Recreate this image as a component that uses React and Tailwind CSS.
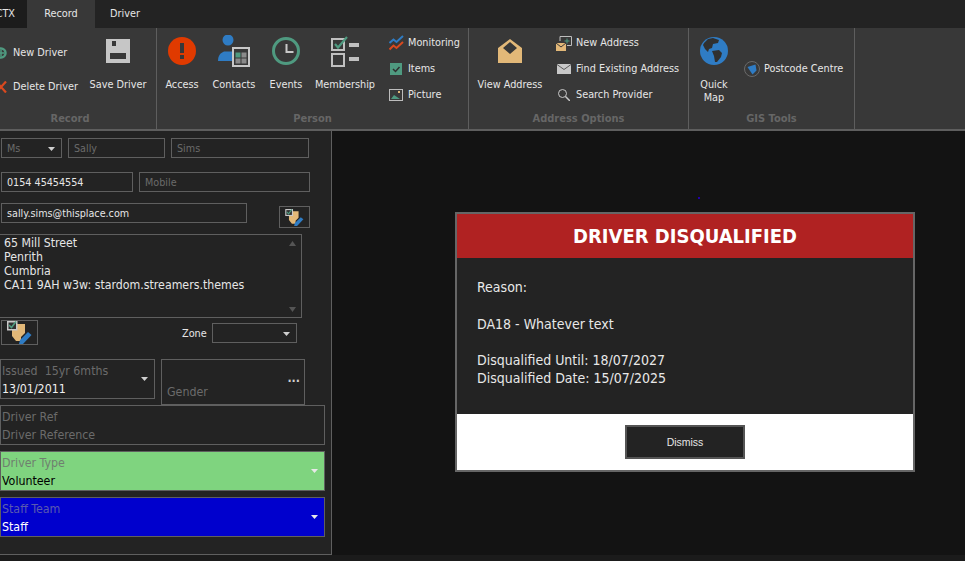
import React from "react";

const Big = ({ icon, label, w }) => (
  <div className={`flex flex-col items-center shrink-0 ${w}`}>
    <div className="h-[28px] w-[28px] mt-[9px] flex items-center justify-center">{icon}</div>
    <div className="mt-[13px] text-center leading-[13px] text-[#e6e6e6] whitespace-nowrap">{label}</div>
  </div>
);

const Small = ({ icon, label }) => (
  <div className="h-[26px] flex items-center whitespace-nowrap text-[#e6e6e6]">
    <div className="w-[16px] h-[16px] shrink-0 flex items-center justify-center">{icon}</div>
    <span className="ml-[4px] pt-px">{label}</span>
  </div>
);

const Group = ({ w, label, children, labelClass = "" }) => (
  <div className={`relative shrink-0 h-full border-r border-[#5e5e5e] flex ${w}`}>
    <div className="flex h-[80px] w-full">{children}</div>
    <div className={`absolute bottom-[3px] left-0 right-0 text-center font-bold text-[11px] text-[#666] leading-[14px] ${labelClass}`}>{label}</div>
  </div>
);

const Field = ({ children, className = "" }) => (
  <div className={`border border-[#5f5f5f] h-[20px] flex items-center px-[5px] pt-[2px] leading-none text-[10.7px] ${className}`}>{children}</div>
);

const Caret = ({ color = "#cfcfcf" }) => (
  <svg width="7" height="4" viewBox="0 0 7 4" className="shrink-0"><path d="M0 0h7L3.5 4z" fill={color} /></svg>
);

const EditIcon = ({ w, h }) => (
  <svg width={w} height={h} viewBox="0 0 25 23">
    <path d="M5 3h13v9l-4 4v4H9l-4-5z" fill="#e2b878" />
    <rect x="0.75" y="0.75" width="9" height="8" fill="#303030" stroke="#c8c8c8" strokeWidth="1.5" />
    <path d="M2 4l2.500 2.500L9 0.500" fill="none" stroke="#4f9a80" strokeWidth="1.6" />
    <path d="M12 23l1-4 8-8 3.500 3L16 23z" fill="#2f7cc4" />
  </svg>
);

const Stacked = ({ label, value, labelColor = "text-[#6b6b6b]", valueColor = "text-[#f0f0f0]", caret, className = "" }) => (
  <div className={`border border-[#5f5f5f] h-[40px] relative pl-[1px] ml-[-1px] text-[12.3px] whitespace-pre ${className}`}>
    <div className={`leading-[18px] mt-[2px] ${labelColor}`}>{label}</div>
    <div className={`leading-[18px] ${valueColor}`}>{value}</div>
    {caret && <div className="absolute right-[6px] top-[17px] flex"><Caret color={caret} /></div>}
  </div>
);

export default function App() {
  return (
    <div className="w-[965px] h-[561px] overflow-hidden bg-[#131313] text-[10.8px] text-[#e6e6e6] font-['DejaVu_Sans_Condensed','Noto_Sans',sans-serif] flex flex-col">
      {/* tabs */}
      <div className="h-[28px] bg-[#232323] flex shrink-0">
        <div className="w-[27px] bg-[#1c1c1c] flex items-center justify-end pr-[12px] whitespace-nowrap">CTX</div>
        <div className="w-[68px] bg-[#383838] flex items-center justify-center">Record</div>
        <div className="w-[60px] flex items-center justify-center">Driver</div>
      </div>
      {/* ribbon */}
      <div className="h-[103px] shrink-0 bg-[#383838] border-b-2 border-[#5e5e5e] flex">
        <Group w="w-[157px]" label="Record" labelClass="pr-[16px]">
          <div className="flex flex-col w-[87px] shrink-0 ml-[-5px] pt-[8px]">
            <div className="h-[34px] flex items-center whitespace-nowrap">
              <svg width="12" height="12" viewBox="0 0 12 12" className="shrink-0"><circle cx="6" cy="6" r="4.500" fill="none" stroke="#4f9a80" strokeWidth="2.500" /><path d="M6 3v6M3 6h6" stroke="#4f9a80" strokeWidth="1.500" /></svg>
              <span className="ml-[6px]">New Driver</span>
            </div>
            <div className="h-[34px] flex items-center whitespace-nowrap">
              <svg width="12" height="12" viewBox="0 0 12 12" className="shrink-0"><path d="M1 0.500l10 11M11 0.500l-10 11" stroke="#d9491f" strokeWidth="2.200" /></svg>
              <span className="ml-[6px]">Delete Driver</span>
            </div>
          </div>
          <Big w="w-[72px]" label="Save Driver" icon={
            <svg width="24" height="24" viewBox="0 0 24 24"><path fillRule="evenodd" d="M0 0h24v24H0zM6 2v5h4V2zM4 14v6h16v-6z" fill="#c6c6c6" /></svg>
          } />
        </Group>
        <Group w="w-[312px]" label="Person">
          <div className="w-0 ml-[-1px]" />
          <Big w="w-[52px]" label="Access" icon={
            <svg width="28" height="28" viewBox="0 0 28 28"><circle cx="14" cy="14" r="14" fill="#e03a00" /><rect x="12" y="6" width="4" height="10" fill="#383838" /><rect x="12" y="18" width="4" height="4" fill="#383838" /></svg>
          } />
          <Big w="w-[52px]" label="Contacts" icon={
            <svg width="32" height="32" viewBox="0 0 32 32" className="shrink-0"><circle cx="10" cy="5" r="5.500" fill="#2f7cc4" /><path d="M0 26c0-5 2-8 6-9.500h8V26z" fill="#2f7cc4" /><rect x="14" y="12" width="18" height="20" fill="#c8c8c8" /><rect x="16" y="14" width="14" height="16" fill="#383838" /><rect x="17.500" y="17.500" width="5" height="5" fill="#4f9a80" /><rect x="23.500" y="17.500" width="5" height="5" fill="#8a8a8a" /><rect x="17.500" y="23.500" width="5" height="5" fill="#8a8a8a" /><rect x="23.500" y="23.500" width="5" height="5" fill="#8a8a8a" /></svg>
          } />
          <Big w="w-[52px]" label="Events" icon={
            <svg width="28" height="28" viewBox="0 0 28 28"><circle cx="14" cy="14" r="12.500" fill="none" stroke="#4f9a80" strokeWidth="3" /><path d="M14.500 7v8h7" fill="none" stroke="#c8c8c8" strokeWidth="2" /></svg>
          } />
          <Big w="w-[66px]" label="Membership" icon={
            <svg width="28" height="28" viewBox="0 0 28 28" className="overflow-visible"><rect x="1" y="2" width="12" height="11" fill="none" stroke="#c0c0c0" strokeWidth="2" /><path d="M4 7l3 3.500L16 0" fill="none" stroke="#4f9a80" strokeWidth="2.200" /><rect x="1" y="17" width="12" height="12" fill="none" stroke="#c0c0c0" strokeWidth="2" /><rect x="18" y="6" width="10" height="4" fill="#c0c0c0" /><rect x="18" y="20" width="10" height="4" fill="#c0c0c0" /></svg>
          } />
          <div className="flex flex-col ml-[10px] pt-[2px]">
            <Small label="Monitoring" icon={<svg width="15" height="16" viewBox="0 0 15 16"><path d="M0.500 8l4-3.500 3 2.500 6.500-6" fill="none" stroke="#2f7cc4" strokeWidth="2" /><path d="M0.500 14.500l4-4 3 2.500 6.500-6" fill="none" stroke="#d9491f" strokeWidth="2" /></svg>} />
            <Small label="Items" icon={<svg width="12" height="12" viewBox="0 0 12 12"><rect width="12" height="12" fill="#4f9a80" /><path d="M3 6l2.500 2.500L9.500 4" fill="none" stroke="#303030" strokeWidth="1.500" /></svg>} />
            <Small label="Picture" icon={<svg width="14" height="12" viewBox="0 0 14 12"><rect x="0.500" y="0.500" width="13" height="11" fill="none" stroke="#bdbdbd" /><path d="M2 10l3-4 3 2 3 2z" fill="#4f9a80" /><rect x="9" y="2" width="2" height="2" fill="#e2b878" /></svg>} />
          </div>
        </Group>
        <Group w="w-[220px]" label="Address Options">
          <Big w="w-[82px]" label="View Address" icon={
            <svg width="24" height="24" viewBox="0 0 24 24"><path fillRule="evenodd" d="M0 9L12 0l12 9v15H0zM12 3L5 9l7 6 7-6z" fill="#e2b878" /></svg>
          } />
          <div className="flex flex-col ml-[5px] pt-[2px]">
            <Small label="New Address" icon={<svg width="16" height="15" viewBox="0 0 16 15"><path d="M4 5V0.500h11.500v9H11" fill="none" stroke="#bdbdbd" /><path d="M11 2.500v5M8.500 5h5" stroke="#4f9a80" /><rect y="7" width="10" height="8" fill="#e2b878" /><path d="M0 7l5 4 5-4" fill="none" stroke="#383838" /></svg>} />
            <Small label="Find Existing Address" icon={<svg width="14" height="10" viewBox="0 0 14 10"><rect width="14" height="10" fill="#c8c8c8" /><path d="M0 0.500l7 5 7-5" fill="none" stroke="#5a5a5a" /></svg>} />
            <Small label="Search Provider" icon={<svg width="12" height="12" viewBox="0 0 12 12"><circle cx="4.500" cy="4.500" r="4" fill="none" stroke="#c8c8c8" /><path d="M7.500 7.500l4.500 4.500" stroke="#c8c8c8" strokeWidth="1.500" /></svg>} />
          </div>
        </Group>
        <Group w="w-[166px]" label="GIS Tools">
          <Big w="w-[50px]" label={<>Quick<br />Map</>} icon={
            <svg width="28" height="28" viewBox="0 0 28 28"><circle cx="14" cy="14" r="14" fill="#2f7cc4" /><path d="M4 6l4-4 5-1 6 2-1 3-5 1-1 4-3 1-1 3-3-3-2-4zM12 14l7-1 3 3-1 4-4 5-2 0-1-6z" fill="#303030" /></svg>
          } />
          <div className="flex flex-col justify-center ml-[5px] pt-[2px]">
            <Small label="Postcode Centre" icon={<svg width="16" height="16" viewBox="0 0 16 16"><circle cx="8" cy="8" r="7.500" fill="none" stroke="#6a6a6a" /><path d="M3.500 6l8-2.500 1 6-4 4z" fill="#2f7cc4" /></svg>} />
          </div>
        </Group>
      </div>
      {/* main */}
      <div className="flex-1 flex items-start relative">
        <div className="w-[332px] h-[424px] shrink-0 bg-[#232323] border-r border-b border-[#5f5f5f] pl-[1px] pt-[7px]">
          <div className="flex gap-[6px] text-[#6b6b6b]">
            <Field className="w-[61px] justify-between pr-[6px]">Ms<Caret /></Field>
            <Field className="w-[97px]">Sally</Field>
            <Field className="w-[138px]">Sims</Field>
          </div>
          <div className="flex gap-[6px] mt-[14px]">
            <Field className="w-[132px]">0154 45454554</Field>
            <Field className="w-[171px] text-[#6b6b6b]">Mobile</Field>
          </div>
          <div className="flex mt-[11px] h-[25px] items-start">
            <Field className="w-[246px]">sally.sims@thisplace.com</Field>
            <div className="ml-[32px] mt-[3px] w-[31px] h-[22px] border border-[#5f5f5f] flex items-center justify-center"><EditIcon w={19} h={17} /></div>
          </div>
          <div className="ml-[-2px] mt-[6px] w-[303px] h-[84px] border border-[#5f5f5f] flex pl-[4px] pt-[1px] leading-[14px] text-[12.25px] text-[#e6e6e6]">
            <div className="flex-1 whitespace-nowrap">65 Mill Street<br />Penrith<br />Cumbria<br />CA11 9AH w3w: stardom.streamers.themes</div>
            <div className="w-[17px] flex flex-col justify-between items-center py-[5px]">
              <svg width="7" height="5" viewBox="0 0 7 5"><path d="M0 5h7L3.500 0z" fill="#555" /></svg>
              <svg width="7" height="5" viewBox="0 0 7 5"><path d="M0 0h7L3.500 5z" fill="#555" /></svg>
            </div>
          </div>
          <div className="flex items-start mt-[2px] h-[39px]">
            <div className="w-[37px] h-[25px] border border-[#5f5f5f] overflow-hidden flex items-center justify-center shrink-0"><EditIcon w={25} h={23} /></div>
            <div className="ml-[144px] mt-[6px] w-[23px] leading-[15px] whitespace-nowrap">Zone</div>
            <Field className="ml-[7px] mt-[3px] w-[85px] justify-end pr-[6px]"><Caret /></Field>
          </div>
          <div className="flex items-start gap-[6px] h-[46px]">
            <Stacked label="Issued  15yr 6mths" value="13/01/2011" caret="#cfcfcf" className="w-[155px]" />
            <div className="w-[144px] h-[46px] border border-[#5f5f5f] relative text-[#6b6b6b] text-[12.3px]">
              <div className="absolute left-[5px] bottom-[5px] leading-[14px]">Gender</div>
              <div className="absolute right-[4px] top-[14px] leading-[8px] text-[#cfcfcf] font-bold">...</div>
            </div>
          </div>
          <div className="flex flex-col gap-[6px]">
            <Stacked label="Driver Ref" value="Driver Reference" valueColor="text-[#6b6b6b]" className="w-[325px]" />
            <Stacked label="Driver Type" value="Volunteer" labelColor="text-[#6f7f6f]" valueColor="text-black" caret="#e8e8e8" className="w-[325px] bg-[#7fd47f]" />
            <Stacked label="Staff Team" value="Staff" labelColor="text-[#5a5ab0]" valueColor="text-white" caret="#e8e8e8" className="w-[325px] bg-[#0000cd]" />
          </div>
        </div>
        <div className="absolute left-[698px] top-[66px] w-[2px] h-[2px] bg-[#2200aa]" />
        <div className="ml-[123px] mt-[81px] w-[460px] h-[260px] border-2 border-[#666] bg-[#232323] flex flex-col">
          <div className="h-[44px] bg-[#b02222] flex items-center justify-center text-white font-bold text-[20px] shrink-0">DRIVER DISQUALIFIED</div>
          <div className="flex-1 px-[20px] pt-[20px] text-[14px] leading-[18px] text-[#e8e8e8]">
            <div>Reason:</div>
            <div className="mt-[19px]">DA18 - Whatever text</div>
            <div className="mt-[18px]">Disqualified Until: 18/07/2027</div>
            <div>Disqualified Date: 15/07/2025</div>
          </div>
          <div className="h-[56px] bg-white flex items-center justify-center shrink-0">
            <div className="w-[120px] h-[34px] bg-[#232323] border-2 border-[#555] pt-px flex items-center justify-center text-[10.5px] font-['Liberation_Sans',sans-serif] text-[#e6e6e6]">Dismiss</div>
          </div>
        </div>
      </div>
      <div className="h-[6px] shrink-0 bg-[#1b1b1b]" />
    </div>
  );
}
